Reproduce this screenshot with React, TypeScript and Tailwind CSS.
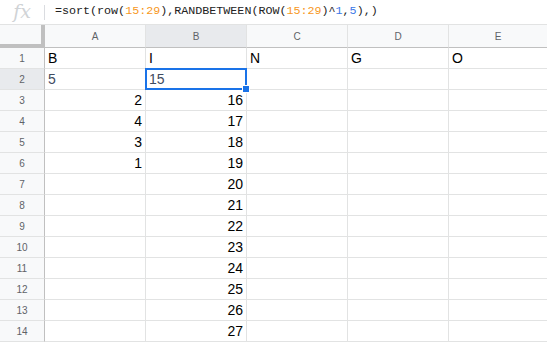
import React from "react";

const cols = ["A", "B", "C", "D", "E"];

type Cell = { v: string; right?: boolean; dim?: boolean };

const rows: Cell[][] = [
  [{ v: "B" }, { v: "I" }, { v: "N" }, { v: "G" }, { v: "O" }],
  [{ v: "5", dim: true }, { v: "15", dim: true }],
  [{ v: "2", right: true }, { v: "16", right: true }],
  [{ v: "4", right: true }, { v: "17", right: true }],
  [{ v: "3", right: true }, { v: "18", right: true }],
  [{ v: "1", right: true }, { v: "19", right: true }],
  ...[20, 21, 22, 23, 24, 25, 26, 27].map((n) => [{ v: "" }, { v: String(n), right: true }]),
];

function Formula() {
  const orange = "text-[#f7981d]";
  const blue = "text-[#3b78e7]";
  return (
    <div className="flex h-[25px] items-center border-b border-[#e2e3e3] bg-white">
      <div className="flex w-[44px] justify-center">
        <span className="font-['DejaVu_Serif',serif] text-[19px] italic leading-none text-[#d0d3d6] -mt-[2px]">fx</span>
      </div>
      <div className="h-[15px] w-px bg-[#dadce0]" />
      <div className="pl-[10px] font-['Liberation_Mono',monospace] text-[11.7px] text-[#222]">
        =sort(row(<span className={orange}>15:29</span>),RANDBETWEEN(ROW(
        <span className={orange}>15:29</span>)^<span className={blue}>1</span>,<span className={blue}>5</span>),)
      </div>
    </div>
  );
}

export default function App() {
  return (
    <div className="h-[345px] w-[547px] overflow-hidden bg-white font-['Liberation_Sans',Arial,sans-serif]">
      <Formula />
      {/* column headers */}
      <div className="flex h-[23px]">
        <div className="w-[45px] shrink-0 border-r-4 border-b-4 border-[#c0c0c0] bg-[#f8f9fa]" />
        {cols.map((c, i) => (
          <div
            key={c}
            className={`flex items-center justify-center border-b border-b-[#c0c0c0] text-[10px] text-[#5f6368] ${
              i === 4 ? "flex-1" : "w-[101px] shrink-0 border-r border-r-[#e2e3e3]"
            } ${c === "B" ? "bg-[#e8eaed]" : "bg-[#f8f9fa]"}`}
          >
            {c}
          </div>
        ))}
      </div>
      {/* rows */}
      {rows.map((r, ri) => (
        <div key={ri} className="flex h-[21px]">
          <div
            className={`flex w-[45px] shrink-0 items-center justify-center border-r border-b border-r-[#c0c0c0] border-b-[#e2e3e3] text-[10px] text-[#5f6368] ${
              ri === 1 ? "bg-[#e8eaed]" : "bg-[#f8f9fa]"
            }`}
          >
            {ri + 1}
          </div>
          {cols.map((c, ci) => {
            const cell = r[ci] ?? { v: "" };
            const selected = ri === 1 && ci === 1;
            return (
              <div
                key={c}
                className={`relative flex items-center border-b border-[#e2e3e3] px-[3px] pt-[1px] text-[14px] ${
                  ci === 4 ? "flex-1" : "w-[101px] shrink-0 border-r"
                } ${cell.right ? "justify-end" : "justify-start"} ${
                  cell.dim ? "text-[#3f4b60]" : "text-black"
                } ${selected ? "z-10" : ""}`}
              >
                {cell.v}
                {selected && (
                  <>
                    <div className="absolute -left-px -top-px right-[-1px] bottom-[-1px] border-2 border-[#1a73e8]" />
                    <div className="absolute -bottom-[4px] -right-[4px] h-[6px] w-[6px] border border-white bg-[#1a73e8] box-content" />
                  </>
                )}
              </div>
            );
          })}
        </div>
      ))}
    </div>
  );
}
